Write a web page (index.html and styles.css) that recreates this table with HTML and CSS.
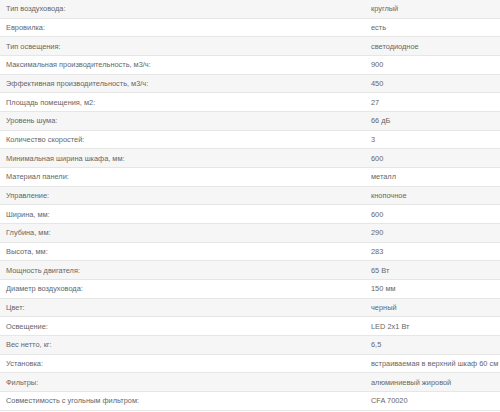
FILE: index.html
```html
<!DOCTYPE html>
<html lang="ru">
<head>
<meta charset="utf-8">
<link rel="stylesheet" href="styles.css">
</head>
<body>
<div class="specs">
  <div class="row"><div class="name">Тип воздуховода:</div><div class="val">круглый</div></div>
  <div class="row"><div class="name">Евровилка:</div><div class="val">есть</div></div>
  <div class="row"><div class="name">Тип освещения:</div><div class="val">светодиодное</div></div>
  <div class="row"><div class="name">Максимальная производительность, м3/ч:</div><div class="val">900</div></div>
  <div class="row"><div class="name">Эффективная производительность, м3/ч:</div><div class="val">450</div></div>
  <div class="row"><div class="name">Площадь помещения, м2:</div><div class="val">27</div></div>
  <div class="row"><div class="name">Уровень шума:</div><div class="val">66 дБ</div></div>
  <div class="row"><div class="name">Количество скоростей:</div><div class="val">3</div></div>
  <div class="row"><div class="name">Минимальная ширина шкафа, мм:</div><div class="val">600</div></div>
  <div class="row"><div class="name">Материал панели:</div><div class="val">металл</div></div>
  <div class="row"><div class="name">Управление:</div><div class="val">кнопочное</div></div>
  <div class="row"><div class="name">Ширина, мм:</div><div class="val">600</div></div>
  <div class="row"><div class="name">Глубина, мм:</div><div class="val">290</div></div>
  <div class="row"><div class="name">Высота, мм:</div><div class="val">283</div></div>
  <div class="row"><div class="name">Мощность двигателя:</div><div class="val">65 Вт</div></div>
  <div class="row"><div class="name">Диаметр воздуховода:</div><div class="val">150 мм</div></div>
  <div class="row"><div class="name">Цвет:</div><div class="val">черный</div></div>
  <div class="row"><div class="name">Освещение:</div><div class="val">LED 2x1 Вт</div></div>
  <div class="row"><div class="name">Вес нетто, кг:</div><div class="val">6,5</div></div>
  <div class="row"><div class="name">Установка:</div><div class="val">встраиваемая в верхний шкаф 60 см</div></div>
  <div class="row"><div class="name">Фильтры:</div><div class="val">алюминиевый жировой</div></div>
  <div class="row"><div class="name">Совместимость с угольным фильтром:</div><div class="val">CFA 70020</div></div>
</div>
</body>
</html>
```
FILE: styles.css
```css
html, body {
  margin: 0;
  padding: 0;
  background: #ffffff;
}
.specs {
  display: grid;
  grid-auto-rows: 18.68px;
  width: 500px;
  font-family: "Liberation Sans", Arial, sans-serif;
  font-size: 7.4px;
  color: #666666;
}
.row {
  display: grid;
  grid-template-columns: 365px 1fr;
  align-items: center;
  border-bottom: 1px solid #e6e6e6;
  box-sizing: border-box;
}
.row:nth-child(odd) {
  background: #f6f6f6;
}
.name, .val {
  padding-left: 6px;
  white-space: nowrap;
}
```
